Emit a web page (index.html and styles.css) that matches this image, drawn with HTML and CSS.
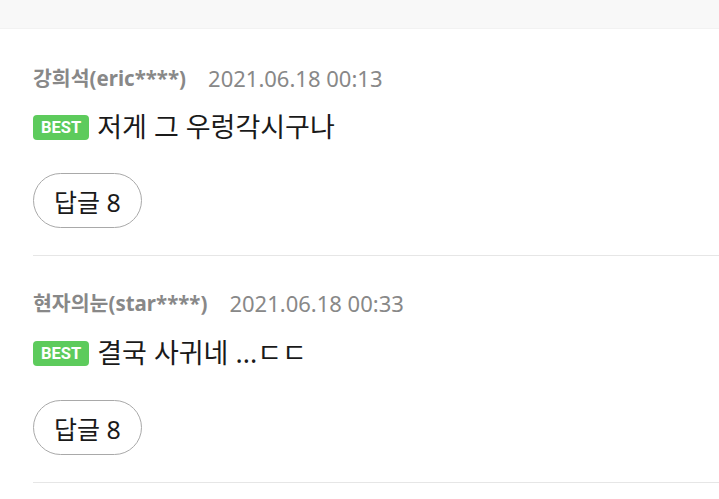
FILE: index.html
```html
<!DOCTYPE html>
<html>
<head>
    <title>댓글</title>
    <link rel="stylesheet" href="styles.css">
</head>
<body>
    <div class="topbar"></div>
    <ul class="comments">
        <li class="comment">
            <div class="meta">
                <span class="author">강희석(eric****)</span>
                <span class="date">2021.06.18 00:13</span>
            </div>
            <p class="text"><span class="best">BEST</span>저게 그 우렁각시구나</p>
            <button class="reply">답글 8</button>
        </li>
        <li class="comment">
            <div class="meta">
                <span class="author">현자의눈(star****)</span>
                <span class="date">2021.06.18 00:33</span>
            </div>
            <p class="text"><span class="best">BEST</span>결국 사귀네 ...ㄷㄷ</p>
            <button class="reply">답글 8</button>
        </li>
    </ul>
</body>
</html>
```

FILE: styles.css
```css
body {
    margin: 0;
    font-family: "Noto Sans", "Noto Sans CJK KR", sans-serif;
    background: #fff;
    color: #111;
}

.topbar {
    height: 28px;
    background: #f8f8f8;
    border-bottom: 1px solid #f2f2f2;
}

.comments {
    list-style: none;
    margin: 0;
    padding: 0 0 0 33px;
}

.comment {
    padding: 36px 0 27px;
    border-bottom: 1px solid #e6e6e6;
}

.comment + .comment {
    padding-top: 34px;
}

.comment + .comment .text {
    margin-top: 24px;
}

.comment + .comment .reply {
    margin-top: 34px;
}

.meta {
    display: flex;
    align-items: center;
    gap: 22px;
    height: 26px;
    line-height: 26px;
}

.author {
    color: #888;
    font-size: 20.5px;
    font-weight: bold;
}

.date {
    color: #888;
    font-size: 22px;
}

.text {
    display: flex;
    align-items: center;
    margin: 23px 0 0;
    height: 26px;
    font-size: 27px;
    line-height: 26px;
    color: #1a1a1a;
}

.best {
    display: inline-block;
    height: 25px;
    padding: 0 8px;
    margin-right: 8px;
    border-radius: 4px;
    background: #5dcb5c;
    color: #fff;
    font-family: Roboto, "Liberation Sans", sans-serif;
    font-size: 16.5px;
    font-weight: bold;
    line-height: 25px;
}

.reply {
    display: block;
    margin-top: 33px;
    width: 109px;
    height: 55px;
    border: 1px solid #a9a9a9;
    border-radius: 28px;
    background: #fff;
    color: #1a1a1a;
    font-family: "Noto Sans", "Noto Sans CJK KR", sans-serif;
    font-size: 25px;
    padding: 0;
}
```
